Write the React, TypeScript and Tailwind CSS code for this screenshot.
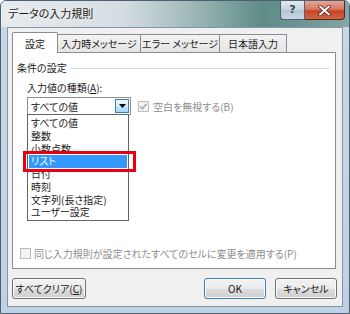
import React from 'react';

const items = ['すべての値', '整数', '小数点数', 'リスト', '日付', '時刻', '文字列(長さ指定)', 'ユーザー設定'];
const tabs = [
    { label: '入力時メッセージ', w: 'w-[83px]' },
    { label: 'エラー メッセージ', w: 'w-[79px]' },
    { label: '日本語入力', w: 'w-[67px]' },
];

const btn = 'h-[21px] rounded-[3px] border text-[10px] flex items-center justify-center shadow-[inset_0_0_0_1px_#fbfbfb] bg-[linear-gradient(#f3f3f3_0%,#ebebeb_50%,#dddddd_50%,#d0d0d0_100%)]';

const App = () => {
    return (
        <div className="w-[350px] h-[314px] overflow-hidden bg-white">
            <div className="w-[350px] h-[314px] flex flex-col rounded-t-[6px] border border-[#4d6072] bg-[linear-gradient(to_bottom,#c9d8e6,#bfd1e2)] font-['Noto_Sans_CJK_JP',sans-serif] [font-feature-settings:'palt'] text-[#1b1b1b]">
                {/* title bar */}
                <div className="h-[26px] flex items-start justify-between bg-[linear-gradient(to_right,#e7ebee_0%,#d6dde2_35%,#9db9b7_55%,#5f8b87_75%,#6f9694_88%,#86a8a7_100%)] rounded-t-[5px]">
                    <div className="pl-[7px] pt-[3px] text-[11px] leading-[18px] [text-shadow:0_0_6px_#ffffff]">データの入力規則</div>
                    <div className="flex mr-[4px]">
                        <div className="w-[25px] h-[19px] border border-[#4f6274] border-t-0 rounded-bl-[4px] bg-[linear-gradient(#dfe8ef_0%,#c7d4df_50%,#b2c3d1_50%,#c8d8e4_100%)] flex items-center justify-center text-[11px] text-[#33495c] font-bold font-['DejaVu_Sans',sans-serif]">?</div>
                        <div className="w-[40px] h-[19px] border border-[#4f2a22] border-t-0 border-l-0 rounded-br-[4px] bg-[linear-gradient(#e8a594_0%,#d57a65_45%,#c7432b_55%,#d2653f_100%)] flex items-center justify-center">
                            <svg width="13" height="11" viewBox="0 0 13 11">
                                <path d="M2 1.5 L11 9.5 M11 1.5 L2 9.5" stroke="#4a1a10" strokeWidth="3.4" strokeLinecap="round" />
                                <path d="M2 1.5 L11 9.5 M11 1.5 L2 9.5" stroke="#ffffff" strokeWidth="2" strokeLinecap="round" />
                            </svg>
                        </div>
                    </div>
                </div>

                {/* client area */}
                <div className="mx-[6px] mb-[6px] flex-1 bg-[#f0f0f0] border border-[#8096aa] flex flex-col px-[4px] pt-[4px]">
                    <div className="flex items-end h-[20px]">
                        <div className="w-[46px] h-[21px] -mb-px relative z-10 bg-white border border-[#898c95] border-b-0 rounded-t-[2px] flex items-center justify-center text-[10px]">設定</div>
                        {tabs.map((t) => (
                            <div key={t.label} className={`${t.w} h-[18px] border border-[#898c95] border-b-0 border-l-0 bg-[linear-gradient(#f3f3f3,#e4e4e4)] flex items-center justify-center text-[10px] whitespace-nowrap`}>
                                {t.label}
                            </div>
                        ))}
                    </div>

                    {/* panel */}
                    <div className="w-[324px] h-[217px] bg-white border border-[#898c95] flex flex-col pl-[4px] pt-[9px] pb-[9px] relative">
                        <div className="flex items-center h-[12px]">
                            <span className="text-[10px] leading-[12px]">条件の設定</span>
                            <div className="flex-1 ml-[4px] mr-[5px] border-t border-[#d5dfe5]"></div>
                        </div>
                        <div className="ml-[10px] mt-[8px] text-[10px] leading-[12px]">
                            入力値の種類(<span className="underline">A</span>):
                        </div>
                        <div className="flex items-center mt-[3px]">
                            <div className="ml-[10px] relative w-[104px] h-[18px] border border-[#8e8f8f] bg-white flex items-center">
                                <span className="pl-[3px] text-[10px] flex-1">すべての値</span>
                                <div className="w-[14px] h-[14px] mr-[1px] border border-[#3c7fb1] bg-[linear-gradient(#eaf6fd_0%,#d9f0fc_50%,#bee6fd_50%,#a7d9f5_100%)] flex items-center justify-center">
                                    <svg width="7" height="4" viewBox="0 0 7 4"><path d="M0 0 H7 L3.5 4 Z" fill="#000" /></svg>
                                </div>
                                {/* dropdown list */}
                                <div className="absolute left-[-1px] top-[16px] w-[102px] h-[107px] border border-[#646464] bg-white pt-[2px] z-20">
                                    {items.map((it, i) => (
                                        <div key={it} className={`h-[12.75px] leading-[12.75px] text-[10px] pl-[2px] mx-[1px] whitespace-nowrap ${i === 3 ? 'bg-[#3399ff] text-white' : ''}`}>
                                            {it}
                                        </div>
                                    ))}
                                </div>
                                {/* red highlight */}
                                <div className="absolute left-[-5px] top-[53px] w-[113px] h-[21px] border-[3px] border-[#e60012] z-30"></div>
                            </div>
                            <div className="ml-[7px] flex items-center text-[10px] text-[#8d8d8d]">
                                <div className="w-[11px] h-[11px] border border-[#bcbcbc] bg-[#f4f4f4] flex items-center justify-center">
                                    <svg width="9" height="9" viewBox="0 0 9 9"><path d="M1.5 4.5 L3.5 6.8 L7.5 1.8" stroke="#a6a6a6" strokeWidth="1.4" fill="none" /></svg>
                                </div>
                                <span className="ml-[4px]">空白を無視する(B)</span>
                            </div>
                        </div>

                        <div className="mt-auto ml-[3px] flex items-center text-[10px] text-[#8d8d8d] h-[12px]">
                            <div className="w-[11px] h-[11px] border border-[#bcbcbc] bg-[#f4f4f4]"></div>
                            <span className="ml-[3px]">同じ入力規則が設定されたすべてのセルに変更を適用する(P)</span>
                        </div>
                    </div>

                    {/* buttons */}
                    <div className="flex mt-[9px]">
                        <div className={`${btn} w-[74px] border-[#707070]`}>
                            すべてクリア(<span className="underline">C</span>)
                        </div>
                        <div className={`${btn} w-[62px] ml-[118px] border-[#3c7fb1] shadow-[inset_0_0_0_1px_#c9ecfc]`}>OK</div>
                        <div className={`${btn} w-[62px] ml-[9px] border-[#707070]`}>キャンセル</div>
                    </div>
                </div>
            </div>
        </div>
    );
};

export default App;
